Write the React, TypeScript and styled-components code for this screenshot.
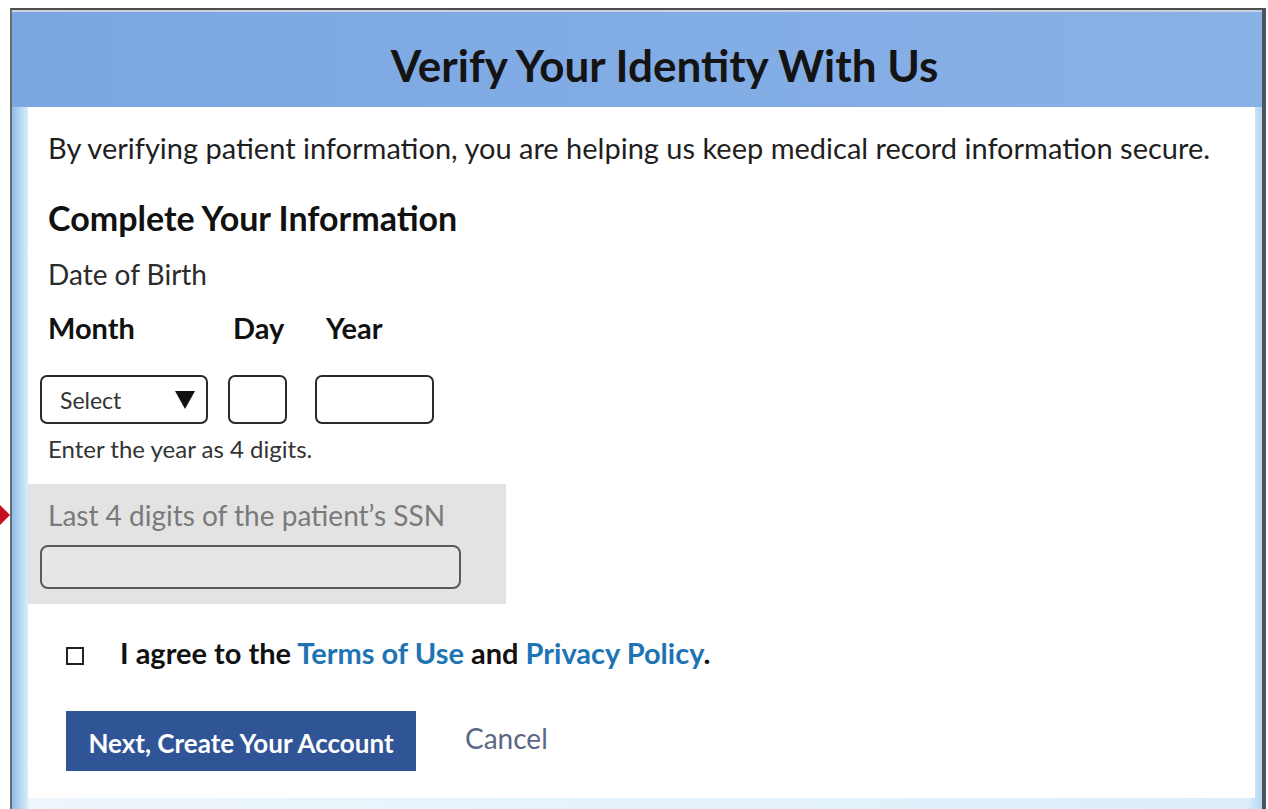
import styled, { createGlobalStyle } from "styled-components";

const GlobalStyle = createGlobalStyle`
  html, body {
    margin: 0;
    padding: 0;
    background: #ffffff;
  }
  body {
    font-family: Lato, "Open Sans", "Liberation Sans", sans-serif;
    color: #222;
  }
`;

const Page = styled.div`
  position: relative;
  width: 1268px;
  height: 809px;
  padding-top: 8px;
  box-sizing: border-box;
  overflow: hidden;
`;

// red marker pointing at the SSN section
const Pointer = styled.div`
  position: absolute;
  left: 0;
  top: 505px;
  width: 0;
  height: 0;
  border-top: 10px solid transparent;
  border-bottom: 10px solid transparent;
  border-left: 10px solid #c4111b;
`;

const Frame = styled.div`
  margin-left: 10px;
  width: 1256px;
  height: 801px;
  box-sizing: border-box;
  border-top: 2px solid #4d4d4d;
  border-left: 2px solid #6b6b6b;
  border-right: 4px solid #4f5560;
  background: linear-gradient(90deg, #8fbde9 0%, #d3e9f8 1.2%, #eef6fc 1.4%, #ddeefa 98.8%, #b7d7f0 100%);
  display: flex;
  flex-direction: column;
`;

const Header = styled.header`
  height: 97px;
  flex: none;
  border-top: 2px solid #c9d3df;
  background: linear-gradient(90deg, #7ca6e2 0%, #83ade5 60%, #88b1e6 100%);
  display: flex;
  justify-content: center;
  align-items: center;
  padding-top: 10px;
  box-sizing: border-box;
`;

const Title = styled.h1`
  margin: 0 0 0 55px;
  font-size: 44px;
  font-weight: 700;
  color: #141414;
`;

const Panel = styled.main`
  flex: 1;
  margin: 0 7px 11px 16px;
  background: #ffffff;
  padding: 24px 20px 0 20px;
  box-sizing: border-box;
`;

const Intro = styled.p`
  margin: 0;
  font-size: 29px;
  line-height: 34px;
  color: #1f1f1f;
`;

const SectionTitle = styled.h2`
  margin: 33px 0 0;
  font-size: 34px;
  line-height: 40px;
  font-weight: 700;
  color: #111;
`;

const FieldLabel = styled.div<{ $muted?: boolean; $top: number }>`
  margin-top: ${(p) => p.$top}px;
  font-size: 28px;
  line-height: 34px;
  color: ${(p) => (p.$muted ? "#7a7a7a" : "#2b2b2b")};
`;

const PartLabels = styled.div`
  display: flex;
  margin-top: 20px;
  font-size: 29px;
  line-height: 34px;
  font-weight: 700;
  color: #111;
`;

const PartLabel = styled.span<{ $width: number }>`
  width: ${(p) => p.$width}px;
`;

const DateRow = styled.div`
  display: flex;
  margin: 30px 0 0 -8px;
`;

const Box = styled.div<{ $width: number; $gap: number }>`
  width: ${(p) => p.$width}px;
  height: 49px;
  margin-right: ${(p) => p.$gap}px;
  box-sizing: border-box;
  border: 2px solid #2a2a2a;
  border-radius: 7px;
  background: #fff;
  display: flex;
  align-items: center;
  justify-content: space-between;
  padding: 0 10px 0 18px;
`;

const SelectText = styled.span`
  font-size: 23px;
  color: #333;
`;

const Hint = styled.div`
  margin-top: 11px;
  font-size: 24px;
  line-height: 28px;
  color: #333;
`;

const SsnBlock = styled.section`
  width: 478px;
  margin: 21px 0 0 -20px;
  padding: 0 0 15px 20px;
  box-sizing: border-box;
  background: #e3e3e3;
  overflow: hidden;
`;

const SsnInput = styled.div`
  width: 421px;
  height: 44px;
  margin: 13px 0 0 -8px;
  box-sizing: border-box;
  border: 2px solid #5a5a5a;
  border-radius: 8px;
  background: #e6e6e6;
`;

const AgreeRow = styled.div`
  display: flex;
  align-items: center;
  margin: 32px 0 0 18px;
  font-size: 29px;
  line-height: 34px;
  font-weight: 700;
  color: #111;
`;

const Check = styled.span`
  width: 18px;
  height: 18px;
  box-sizing: border-box;
  border: 2px solid #222;
  margin: 6px 36px 0 0;
  flex: none;
`;

const Link = styled.a`
  color: #1d74b4;
  text-decoration: none;
`;

const Actions = styled.div`
  display: flex;
  align-items: center;
  margin: 41px 0 0 18px;
`;

const PrimaryButton = styled.button`
  width: 350px;
  height: 60px;
  border: none;
  background: #2f5597;
  color: #fff;
  font-family: inherit;
  font-size: 26px;
  font-weight: 700;
  padding: 4px 0 0;
  cursor: pointer;
`;

const CancelLink = styled.a`
  margin: 0 0 6px 49px;
  font-size: 28px;
  color: #5b6784;
  text-decoration: none;
`;

const Caret = () => (
  <svg width="22" height="22" viewBox="0 0 22 22">
    <path d="M1 2 L21 2 L11 20 Z" fill="#111" />
  </svg>
);

export default function App() {
  return (
    <>
      <GlobalStyle />
      <Page>
        <Pointer />
        <Frame>
          <Header>
            <Title>Verify Your Identity With Us</Title>
          </Header>
          <Panel>
            <Intro>
              By verifying patient information, you are helping us keep medical record information secure.
            </Intro>
            <SectionTitle>Complete Your Information</SectionTitle>
            <FieldLabel $top={19}>Date of Birth</FieldLabel>
            <PartLabels>
              <PartLabel $width={185}>Month</PartLabel>
              <PartLabel $width={93}>Day</PartLabel>
              <PartLabel $width={80}>Year</PartLabel>
            </PartLabels>
            <DateRow>
              <Box $width={168} $gap={20}>
                <SelectText>Select</SelectText>
                <Caret />
              </Box>
              <Box $width={59} $gap={28} />
              <Box $width={119} $gap={0} />
            </DateRow>
            <Hint>Enter the year as 4 digits.</Hint>
            <SsnBlock>
              <FieldLabel $muted $top={14}>
                Last 4 digits of the patient’s SSN
              </FieldLabel>
              <SsnInput />
            </SsnBlock>
            <AgreeRow>
              <Check />
              <span>
                I agree to the <Link href="#">Terms of Use</Link> and <Link href="#">Privacy Policy</Link>.
              </span>
            </AgreeRow>
            <Actions>
              <PrimaryButton>Next, Create Your Account</PrimaryButton>
              <CancelLink href="#">Cancel</CancelLink>
            </Actions>
          </Panel>
        </Frame>
      </Page>
    </>
  );
}
